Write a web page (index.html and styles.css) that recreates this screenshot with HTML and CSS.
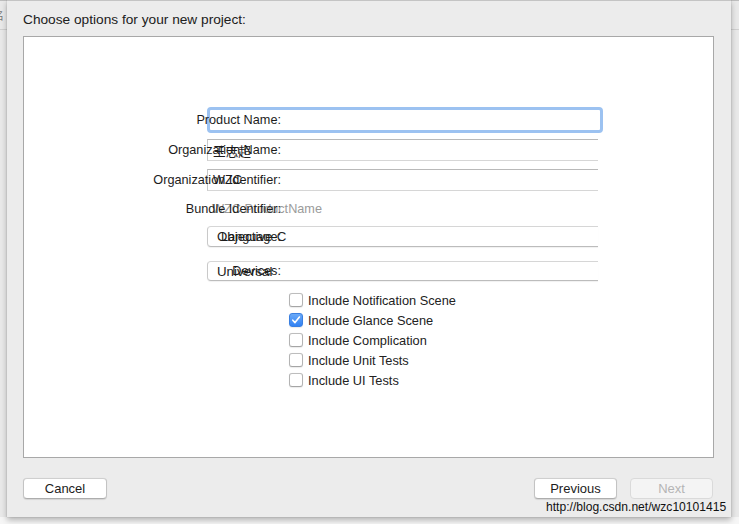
FILE: index.html
```html
<!DOCTYPE html>
<html>
<head>
<meta charset="utf-8">
<link rel="stylesheet" href="styles.css">
</head>
<body>
<div class="screen">
  <div class="side side-left"><span class="clip-text">名</span></div>
  <div class="dialog">
    <div class="title">Choose options for your new project:</div>
    <div class="panel">
      <div class="form">
        <div class="row row-product">
          <div class="field field-focus"></div>
          <div class="label">Product Name:</div>
        </div>
        <div class="row row-text">
          <div class="field field-text"><span class="value">王志超</span></div>
          <div class="label">Organization Name:</div>
        </div>
        <div class="row row-text row-orgid">
          <div class="field field-text"><span class="value">WZC</span></div>
          <div class="label">Organization Identifier:</div>
        </div>
        <div class="row row-bundle">
          <div class="field field-plain"><span class="value muted">WZC.ProductName</span></div>
          <div class="label">Bundle Identifier:</div>
        </div>
        <div class="row row-popup row-lang">
          <div class="field field-popup"><span class="value popup-value">Objective-C</span></div>
          <div class="label">Language:</div>
        </div>
        <div class="row row-popup row-devices">
          <div class="field field-popup"><span class="value popup-value">Universal</span></div>
          <div class="label">Devices:</div>
        </div>
        <div class="checks">
          <div class="check"><span class="cb"></span><span>Include Notification Scene</span></div>
          <div class="check"><span class="cb cb-on"><svg width="10" height="10" viewBox="0 0 10 10"><path d="M1.8 5.2 L4 7.6 L8.4 2" fill="none" stroke="#fff" stroke-width="1.6" stroke-linecap="round" stroke-linejoin="round"/></svg></span><span>Include Glance Scene</span></div>
          <div class="check"><span class="cb"></span><span>Include Complication</span></div>
          <div class="check"><span class="cb"></span><span>Include Unit Tests</span></div>
          <div class="check"><span class="cb"></span><span>Include UI Tests</span></div>
        </div>
      </div>
    </div>
    <div class="footer">
      <button class="btn">Cancel</button>
      <div class="footer-right">
        <button class="btn">Previous</button>
        <button class="btn btn-disabled">Next</button>
      </div>
    </div>
  </div>
  <div class="side side-right"></div>
  <div class="watermark">http://blog.csdn.net/wzc10101415</div>
</div>
</body>
</html>
```

FILE: styles.css
```css
* { box-sizing: border-box; }
html, body { margin: 0; padding: 0; }
body {
  background: #f6f6f6;
  font-family: "Liberation Sans", Arial, "Noto Sans CJK SC", sans-serif;
  color: #1c1c1c;
  width: 739px;
  height: 524px;
  overflow: hidden;
}
.screen {
  position: relative;
  display: flex;
  align-items: flex-start;
  height: 524px;
}
.side {
  height: 517px;
  background: #e9e9e9;
  border-top: 1px solid #bdbdbd;
  position: relative;
}
.side-left { width: 7px; overflow: hidden; }
.side-right { flex: 1; }
.side::after {
  content: "";
  display: block;
  margin-top: 28px;
  border-top: 1px solid #d0d0d0;
}
.clip-text {
  position: absolute;
  left: -7px;
  top: 6px;
  font-size: 11px;
  color: #777;
}
.dialog {
  width: 724px;
  height: 517px;
  background: #ececec;
  border-top: 1px solid #c4c4c4;
  box-shadow: 0 3px 6px rgba(0,0,0,0.28), 0 0 1px rgba(0,0,0,0.25);
  padding: 0 17px 0 16px;
  display: flex;
  flex-direction: column;
  position: relative;
  z-index: 1;
}
.title {
  font-size: 13.7px;
  line-height: 16px;
  margin-top: 11px;
  height: 24px;
  color: #202020;
}
.panel {
  height: 422px;
  background: #fff;
  border: 1px solid #a8a8a8;
}
.form {
  padding-top: 70px;
  display: flex;
  flex-direction: column;
}
.row {
  display: grid;
  grid-template-columns: 183px 74px 317px;
  align-items: center;
}
.row .label {
  grid-column: 1 / 3;
  grid-row: 1;
  text-align: right;
  font-size: 12.7px;
  color: #1c1c1c;
  position: relative;
  z-index: 2;
}
.row .field {
  grid-column: 2 / 4;
  grid-row: 1;
  display: flex;
  align-items: center;
}
.row-product { height: 26px; }
.field-focus {
  height: 26px;
  margin-right: -5px;
  border: 3px solid #9cc2f1;
  border-radius: 4px;
  background: #fff;
}
.row-text { height: 22px; margin-top: 6px; }
.row-orgid { margin-top: 8px; }
.field-text {
  height: 22px;
  border-top: 1px solid #b9b9b9;
  border-left: 1px solid #cacaca;
  border-bottom: 1px solid #d6d6d6;
  padding-left: 5px;
}
.value {
  font-size: 12.7px;
  color: #1c1c1c;
}
.row-bundle { height: 20px; margin-top: 8px; }
.field-plain { height: 20px; padding-left: 5px; }
.muted { color: #9b9b9b; }
.row-popup { height: 21px; }
.row-lang { margin-top: 7px; }
.row-devices { margin-top: 14px; height: 20px; }
.field-popup {
  height: 100%;
  border: 1px solid #c9c9c9;
  border-right: none;
  border-top-color: #d6d6d6;
  border-bottom-color: #bcbcbc;
  border-radius: 4px 0 0 4px;
  box-shadow: 0 1px 1px rgba(0,0,0,0.06);
  padding-left: 9px;
}
.popup-value { font-size: 13.3px; color: #222; }
.checks {
  margin-top: 9px;
  margin-left: 265px;
  display: flex;
  flex-direction: column;
}
.check {
  height: 20px;
  display: flex;
  align-items: center;
  gap: 5px;
  font-size: 12.8px;
  color: #222;
}
.cb {
  width: 14px;
  height: 14px;
  border: 1px solid #b3b3b3;
  border-top-color: #bdbdbd;
  border-bottom-color: #a5a5a5;
  border-radius: 3px;
  background: #fff;
  box-shadow: 0 0.5px 1px rgba(0,0,0,0.08);
  display: flex;
  align-items: center;
  justify-content: center;
}
.cb-on {
  background: linear-gradient(#6aa9f7, #3182f4);
  border-color: #3a7fe0;
}
.footer {
  margin-top: 20px;
  display: flex;
  justify-content: space-between;
  align-items: flex-start;
}
.footer-right { display: flex; gap: 13px; margin-right: 1px; }
.btn {
  width: 84px;
  height: 21px;
  padding: 0;
  font-family: "Liberation Sans", Arial, sans-serif;
  font-size: 13px;
  color: #1c1c1c;
  background: #fff;
  border: 1px solid #c3c3c3;
  border-top-color: #cfcfcf;
  border-bottom-color: #adadad;
  border-radius: 4px;
  box-shadow: 0 0.5px 1px rgba(0,0,0,0.1);
}
.footer-right .btn { width: 83px; }
.btn-disabled {
  background: #f4f4f4;
  color: #b5b5b5;
  border-color: #dadada;
  box-shadow: none;
}
.watermark {
  position: absolute;
  left: 546px;
  top: 500px;
  font-size: 12.1px;
  color: #111;
  z-index: 3;
  white-space: nowrap;
}
```
